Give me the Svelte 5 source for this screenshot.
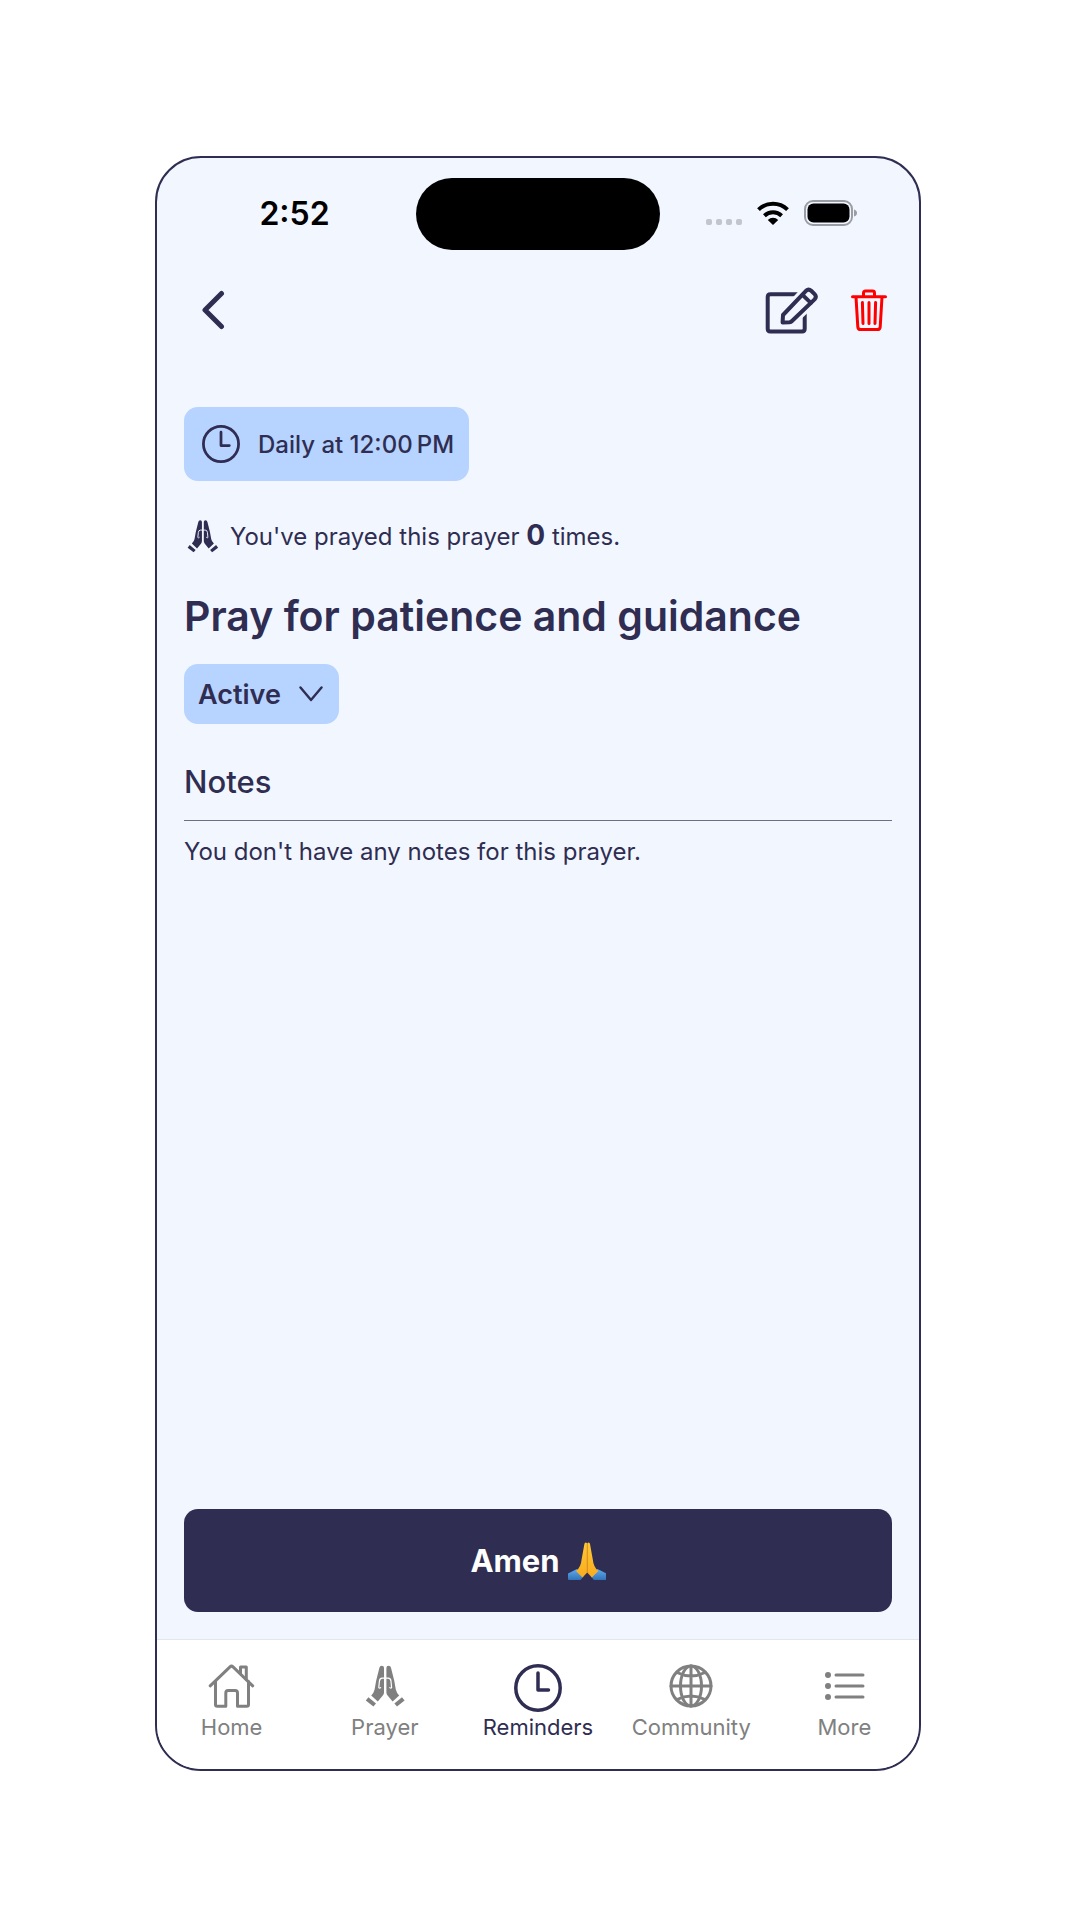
<script>
  const tabs = [
    { label: 'Home', icon: 'home' },
    { label: 'Prayer', icon: 'hands' },
    { label: 'Reminders', icon: 'clock' },
    { label: 'Community', icon: 'globe' },
    { label: 'More', icon: 'list' }
  ];
  let active = $state('Reminders');
  let status = $state('Active');
  let count = $state(0);
</script>

{#snippet clock()}
  <circle cx="24" cy="24" r="22.2" />
  <path d="M24 9V26H34.5" />
{/snippet}

{#snippet hand()}
  <path class="solid" d="M18.4 3.8Q18.8 1.8 20.8 1.8Q23 1.8 23 3.8V28.5Q23 30 22 31.2L16.8 37.6L10.2 31.4Q12.9 28.6 13.6 25.4L15.2 16.5Z" />
  <path class="solid" d="M7.4 33.2L15 39.4L12.4 42.4L4.8 36.6Z" />
  <path class="cut" d="M24 14.2H21.2Q18.6 14.4 18.4 17.2L17.8 23.6Q18.4 24.8 19.6 23.6" />
{/snippet}

{#snippet hands()}
  <g>{@render hand()}</g>
  <g transform="matrix(-1 0 0 1 48.4 0)">{@render hand()}</g>
{/snippet}

<main>
  <div class="phone">
    <div class="statusbar">
      <time class="time">2:52</time>
      <div class="island"></div>
      <div class="indicators">
        <div class="dots"><i></i><i></i><i></i><i></i></div>
        <svg class="wifi" viewBox="0 0 34 24" width="34" height="24" aria-hidden="true">
          <path d="M2.5 8.6A21 21 0 0 1 31.5 8.6" />
          <path d="M8.4 14.8A12.5 12.5 0 0 1 25.6 14.8" />
          <path class="fan" d="M17 24L11.8 18.9A7.5 7.5 0 0 1 22.2 18.9Z" />
        </svg>
        <svg viewBox="0 0 54 26" width="54" height="26" aria-hidden="true">
          <rect class="shell" x="1" y="1" width="47" height="24" rx="8" />
          <rect x="3.5" y="3.5" width="42" height="19" rx="6" />
          <path class="nub" d="M50 9.5Q53 10.5 53 13T50 16.5Z" />
        </svg>
      </div>
    </div>

    <header>
      <button class="icon" aria-label="Back">
        <svg class="back" viewBox="0 0 24 40" width="24" height="40"><path d="M20.5 3.5L4 20L20.5 36.5" /></svg>
      </button>
      <div class="actions">
        <button class="icon" aria-label="Edit">
          <svg class="edit" viewBox="0 0 54 48" width="54" height="48">
            <path d="M34 8.2H5.4Q2.7 8.2 2.7 10.9V42.7Q2.7 45.4 5.4 45.4H37Q39.7 45.4 39.7 42.7V22" />
            <path class="halo" d="M17.6 36.4L18 29L41 4.8Q43.6 2.3 46.2 4.8L49.6 8.2Q52 10.8 49.6 13.4L27 35Q26 36 24.5 36.2Z" />
            <path d="M17.6 36.4L18 29L41 4.8Q43.6 2.3 46.2 4.8L49.6 8.2Q52 10.8 49.6 13.4L27 35Q26 36 24.5 36.2Z" />
            <path d="M37.5 8.9L45.8 16.9" />
          </svg>
        </button>
        <button class="icon" aria-label="Delete">
          <svg class="trash" viewBox="0 0 36 42" width="36" height="42">
            <path d="M1.5 7.8H34.5M12.5 7.5V4Q12.5 2.1 14.4 2.1H21.6Q23.5 2.1 23.5 4V7.5M5 8L6.8 37.8Q7 40.6 9.8 40.6H26.2Q29 40.6 29.2 37.8L31 8" />
            <path d="M11.4 13.5L12 34.5M18 13.5V34.5M24.6 13.5L24 34.5" />
          </svg>
        </button>
      </div>
    </header>

    <section class="content">
      <button class="chip">
        <svg class="line" viewBox="0 0 48 48" width="38" height="38" aria-hidden="true">{@render clock()}</svg>
        <span>Daily at 12:00&#8239;PM</span>
      </button>

      <p class="count">
        <svg viewBox="4 2 42 42" width="33" height="34" aria-hidden="true">{@render hands()}</svg>
        <span>You've prayed this prayer <strong>{count}</strong> times.</span>
      </p>

      <h1>Pray for patience and guidance</h1>

      <div class="state">
        <select aria-label="Prayer status" bind:value={status}>
          <option>Active</option>
        </select>
        <svg viewBox="0 0 24 16" width="24" height="16" aria-hidden="true"><path d="M1.5 1.5L12 14L22.5 1.5" /></svg>
      </div>

      <h2>Notes</h2>
      <p class="note">You don't have any notes for this prayer.</p>

      <button class="amen" onclick={() => count++}>
        <span>Amen</span>
        <svg viewBox="0 0 38 38" width="38" height="38" aria-hidden="true">
          <defs>
            <linearGradient id="skin" x1="0" y1="0" x2="0" y2="1">
              <stop offset="0" stop-color="#ffc83a" />
              <stop offset="1" stop-color="#f9ac1c" />
            </linearGradient>
            <linearGradient id="sleeve" x1="0" y1="0" x2="0" y2="1">
              <stop offset="0" stop-color="#62abee" />
              <stop offset="1" stop-color="#3273b8" />
            </linearGradient>
            <g id="palm">
              <path fill="url(#sleeve)" d="M0 31.5L9 27L15.5 34.5L12.5 38H1Q0 38 0 37Z" />
              <path fill="url(#skin)" d="M16.4 2Q16.6 .4 17.8 .4Q19.2 .4 19.2 2V30.5L14.5 35.5L8 29Q13 25 13.5 18Z" />
            </g>
          </defs>
          <use href="#palm" />
          <use href="#palm" transform="matrix(-1 0 0 1 38.4 0)" />
          <path class="crease" d="M19.2 2V30.5" />
        </svg>
      </button>
    </section>

    <nav>
      {#each tabs as tab}
        <a href="#{tab.icon}" class:active={active === tab.label} onclick={() => (active = tab.label)}>
          <svg class={tab.icon === 'hands' ? '' : 'line'} viewBox="0 0 48 48" width="48" height="48" aria-hidden="true">
            {#if tab.icon === 'home'}
              <path d="M2.2 21.8L22 2.8Q23.5 1.4 25 2.8L44.7 21.8" />
              <path d="M7.5 17.5V40.5Q7.5 42.3 9.3 42.3H17.8V29Q17.8 26.6 20.2 26.6H27.1Q29.5 26.6 29.5 29V42.3H38.7Q40.5 42.3 40.5 40.5V17.5M32.5 9.5V3H38.3V15" />
            {:else if tab.icon === 'hands'}
              {@render hands()}
            {:else if tab.icon === 'clock'}
              {@render clock()}
            {:else if tab.icon === 'globe'}
              <circle cx="24" cy="22" r="20" />
              <ellipse cx="24" cy="22" rx="10.5" ry="20" />
              <path d="M24 2V42M4 22H44M10 8.5Q24 15.5 38 8.5M10 35.5Q24 28.5 38 35.5" />
            {:else}
              <path d="M16 11H43M16 22H43M16 33H43" />
              <path class="bullet" d="M8 11h.01M8 22h.01M8 33h.01" />
            {/if}
          </svg>
          <span>{tab.label}</span>
        </a>
      {/each}
    </nav>
  </div>
</main>

<style>
  :global(body) {
    margin: 0;
    background: #fff;
  }
  main {
    --ink: #2f2d51;
    --sky: #f2f7ff;
    --blue: #b7d3ff;
    box-sizing: border-box;
    display: flex;
    min-height: 100vh;
    padding: 156px 159px 149px 155px;
    font-family: Inter, 'Liberation Sans', sans-serif;
    color: var(--ink);
  }
  .phone {
    flex: 1;
    display: flex;
    flex-direction: column;
    overflow: hidden;
    border: 2px solid var(--ink);
    border-radius: 46px;
    background: var(--sky);
  }
  button,
  select {
    border: 0;
    margin: 0;
    padding: 0;
    background: none;
    color: inherit;
    font: inherit;
  }
  svg {
    display: block;
    flex: none;
    fill: none;
    stroke-linecap: round;
    stroke-linejoin: round;
  }

  .statusbar {
    display: grid;
    grid-template-columns: 1fr 244px 1fr;
    align-items: center;
    padding: 20px 0 30px;
    color: #000;
  }
  .time {
    padding-left: 16px;
    text-align: center;
    font-size: 32px;
    line-height: 40px;
    font-weight: 600;
  }
  .island {
    height: 72px;
    border-radius: 36px;
    background: #000;
  }
  .indicators {
    display: flex;
    justify-content: center;
    align-items: center;
    gap: 14px;
    padding: 0 16px 2px 0;
  }
  .indicators svg {
    fill: #000;
  }
  .indicators .wifi {
    fill: none;
    stroke: #000;
    stroke-width: 4;
    stroke-linecap: butt;
  }
  .wifi .fan {
    fill: #000;
    stroke: none;
  }
  .indicators .shell {
    fill: none;
    stroke: #9b9da4;
    stroke-width: 2;
  }
  .nub {
    fill: #9b9da4;
  }
  .dots {
    display: flex;
    gap: 4px;
    padding-top: 18px;
  }
  .dots i {
    width: 6px;
    height: 6px;
    border-radius: 2px;
    background: #c2c5ce;
  }

  header {
    display: flex;
    align-items: center;
    justify-content: space-between;
    height: 60px;
    padding: 0 32px 0 44px;
  }
  .actions {
    display: flex;
    align-items: center;
    gap: 32px;
  }
  .edit {
    stroke: var(--ink);
    stroke-width: 4;
  }
  .back {
    stroke: var(--ink);
    stroke-width: 5;
  }
  .edit .halo {
    fill: var(--sky);
    stroke: var(--sky);
    stroke-width: 10;
  }
  .trash {
    stroke: #f00;
    stroke-width: 3;
  }

  .content {
    flex: 1;
    display: flex;
    flex-direction: column;
    align-items: flex-start;
    padding: 67px 27px 27px;
  }
  .line {
    stroke: currentColor;
    stroke-width: 3;
  }
  .line .bullet {
    stroke-width: 6;
  }
  .chip .line,
  .active .line {
    stroke-width: 3.5;
  }
  .solid {
    fill: currentColor;
  }
  .cut {
    stroke: var(--sky);
    stroke-width: 1.2;
  }
  nav .cut {
    stroke: #fff;
  }
  .chip {
    display: flex;
    align-items: center;
    gap: 18px;
    height: 74px;
    padding: 0 15px 0 18px;
    border-radius: 14px;
    background: var(--blue);
    font-size: 24px;
    font-weight: 500;
  }
  .count {
    display: flex;
    align-items: center;
    gap: 10px;
    margin: 39px 0 36px;
    padding-left: 3px;
    font-size: 24px;
    line-height: 34px;
  }
  .count strong {
    font-size: 28px;
    line-height: 28px;
    font-weight: 700;
  }
  h1 {
    margin: 0 0 22px;
    font-size: 41px;
    line-height: 52px;
    font-weight: 600;
  }
  .state {
    display: grid;
    align-items: center;
    border-radius: 14px;
    background: var(--blue);
  }
  .state > * {
    grid-area: 1 / 1;
  }
  .state select {
    appearance: none;
    height: 60px;
    padding: 0 58px 0 14px;
    font-size: 27px;
    font-weight: 600;
  }
  .state svg {
    justify-self: end;
    margin-right: 16px;
    stroke: var(--ink);
    stroke-width: 2.4;
    pointer-events: none;
  }
  h2 {
    align-self: stretch;
    margin: 40px 0 16px;
    padding-bottom: 20px;
    border-bottom: 1px solid #6f6e85;
    font-size: 31px;
    line-height: 36px;
    font-weight: 500;
  }
  .note {
    margin: 0;
    font-size: 24px;
    line-height: 30px;
  }
  .amen {
    align-self: stretch;
    display: flex;
    align-items: center;
    justify-content: center;
    gap: 8px;
    height: 103px;
    margin-top: auto;
    border-radius: 14px;
    background: var(--ink);
    color: #fff;
    font-size: 31px;
    font-weight: 700;
  }
  .crease {
    stroke: #d98a14;
    stroke-width: .8;
  }

  nav {
    display: flex;
    margin: 0 -2px;
    padding: 24px 0 27px;
    border-top: 1px solid #e4e6ea;
    background: #fff;
  }
  nav a {
    flex: 1 1 0;
    display: flex;
    flex-direction: column;
    align-items: center;
    color: #808080;
    font-size: 22px;
    line-height: 30px;
    text-decoration: none;
  }
  nav a.active {
    color: var(--ink);
  }
</style>
